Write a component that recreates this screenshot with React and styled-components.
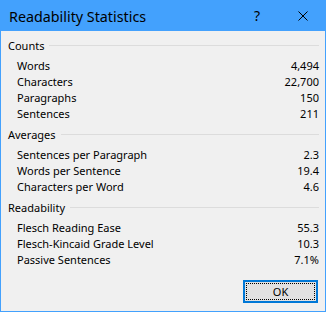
import React from "react";
import styled, { createGlobalStyle } from "styled-components";

const Global = createGlobalStyle`
  html, body { margin: 0; padding: 0; background: #f0f0f0; }
  * { box-sizing: border-box; }
`;

const ACCENT = "#43a1fd";
const FONT = `"Noto Sans", "Liberation Sans", sans-serif`;

const Window = styled.div`
  width: 326px;
  height: 312px;
  display: flex;
  flex-direction: column;
  background: #f0f0f0;
  border: 1px solid ${ACCENT};
  border-top: none;
  font-family: ${FONT};
  color: #000;
`;

const TitleBar = styled.div`
  height: 31px;
  margin: 0 -1px;
  background: ${ACCENT};
  display: flex;
  align-items: center;
`;

const Title = styled.div`
  flex: 1;
  padding-left: 9px;
  padding-top: 1px;
  font-size: 14.3px;
  color: #000;
  white-space: nowrap;
`;

const CaptionButton = styled.div`
  width: 46px;
  height: 31px;
  display: flex;
  align-items: center;
  justify-content: center;
  font-size: 14px;
`;

const Body = styled.div`
  flex: 1;
  display: flex;
  flex-direction: column;
  padding: 7px 6px 8px 6px;
`;

const Section = styled.div`
  display: flex;
  flex-direction: column;
  & + & { margin-top: 5px; }
`;

const Header = styled.div`
  display: flex;
  align-items: center;
  gap: 5px;
  height: 16px;
  line-height: 16px;
  font-size: 11px;
  margin-bottom: 4px;
  padding-left: 1px;
  &::after {
    content: "";
    flex: 1;
    height: 1px;
    background: #dcdcdc;
    margin-top: -2px;
  }
`;

const Row = styled.div`
  display: flex;
  justify-content: space-between;
  height: 16px;
  line-height: 16px;
  font-size: 11px;
  padding-left: 10px;
`;

const Footer = styled.div`
  margin-top: auto;
  display: flex;
  justify-content: flex-end;
  padding-right: 1px;
`;

const Button = styled.button`
  width: 75px;
  height: 23px;
  padding: 0;
  border: 2px solid #0078d7;
  background: #e1e1e1;
  font-family: ${FONT};
  font-size: 11px;
  color: #000;
  display: flex;
  position: relative;
  align-items: center;
  justify-content: center;
  &::before {
    content: "";
    position: absolute;
    inset: 1px;
    border: 1px dotted #000;
  }
`;

const sections = [
  { title: "Counts", rows: [["Words", "4,494"], ["Characters", "22,700"], ["Paragraphs", "150"], ["Sentences", "211"]] },
  { title: "Averages", rows: [["Sentences per Paragraph", "2.3"], ["Words per Sentence", "19.4"], ["Characters per Word", "4.6"]] },
  { title: "Readability", rows: [["Flesch Reading Ease", "55.3"], ["Flesch-Kincaid Grade Level", "10.3"], ["Passive Sentences", "7.1%"]] },
];

export default function App() {
  return (
    <>
      <Global />
      <Window>
        <TitleBar>
          <Title>Readability Statistics</Title>
          <CaptionButton>?</CaptionButton>
          <CaptionButton>
            <svg width="10" height="10" viewBox="0 0 10 10">
              <path d="M0.5 0.5 L9.5 9.5 M9.5 0.5 L0.5 9.5" stroke="#000" strokeWidth="1" />
            </svg>
          </CaptionButton>
        </TitleBar>
        <Body>
          {sections.map((s) => (
            <Section key={s.title}>
              <Header>{s.title}</Header>
              {s.rows.map(([k, v]) => (
                <Row key={k}>
                  <span>{k}</span>
                  <span>{v}</span>
                </Row>
              ))}
            </Section>
          ))}
          <Footer>
            <Button>OK</Button>
          </Footer>
        </Body>
      </Window>
    </>
  );
}
